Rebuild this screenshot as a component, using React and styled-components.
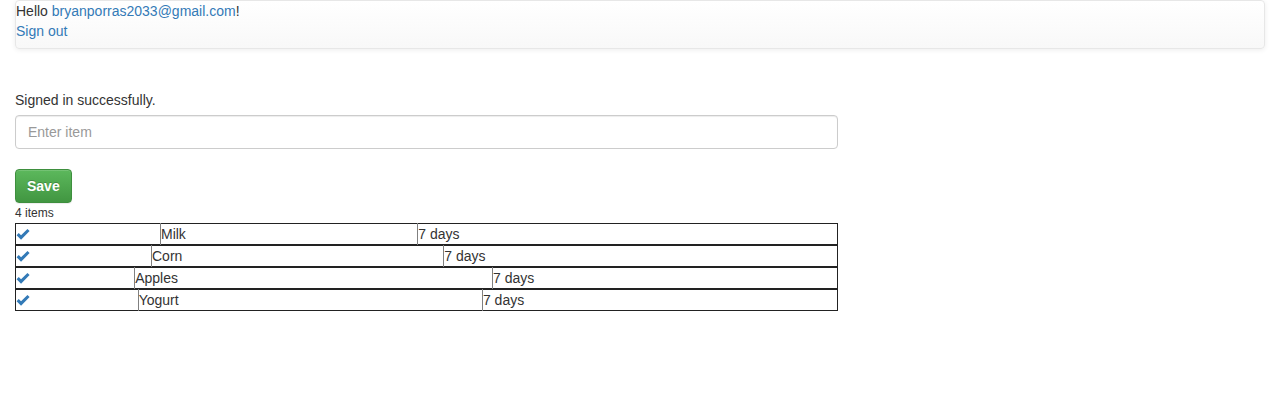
import React from 'react';
import styled, { createGlobalStyle } from 'styled-components';

const GlobalStyle = createGlobalStyle`
  body {
    margin: 0;
    font-family: "Liberation Sans", Arial, sans-serif;
    font-size: 14px;
    line-height: 20px;
    color: #333;
    background: #fff;
  }
`;

const Page = styled.div`
  padding: 0 15px;
`;

const TopBar = styled.div`
  height: 47px;
  padding: 0;
  border: 1px solid #e7e7e7;
  border-radius: 4px;
  background-image: linear-gradient(to bottom, #fff 0, #f8f8f8 100%);
  box-shadow: inset 0 1px 0 rgba(255, 255, 255, 0.15), 0 1px 5px rgba(0, 0, 0, 0.075);
`;

const Link = styled.a`
  color: #337ab7;
  text-decoration: none;
  cursor: pointer;
`;

const Line = styled.div``;

const Notice = styled.p`
  margin: 41px 0 5px;
`;

const Form = styled.form`
  width: 823px;
`;

const Input = styled.input`
  display: block;
  box-sizing: border-box;
  width: 100%;
  height: 34px;
  padding: 6px 12px;
  font: inherit;
  color: #555;
  border: 1px solid #ccc;
  border-radius: 4px;
  box-shadow: inset 0 1px 1px rgba(0, 0, 0, 0.075);
  outline: none;

  &::placeholder {
    color: #999;
  }
`;

const SaveButton = styled.button`
  display: block;
  margin-top: 20px;
  height: 34px;
  padding: 6px 11px;
  font: inherit;
  font-weight: 700;
  color: #fff;
  text-shadow: 0 -1px 0 rgba(0, 0, 0, 0.2);
  border: 1px solid #3e8f3e;
  border-radius: 4px;
  background-image: linear-gradient(to bottom, #5cb85c 0, #419641 100%);
  box-shadow: inset 0 1px 0 rgba(255, 255, 255, 0.15), 0 1px 1px rgba(0, 0, 0, 0.075);
`;

const Count = styled.small`
  display: block;
  font-size: 12px;
  line-height: 20px;
`;

const ItemTable = styled.table`
  width: 823px;
  border-collapse: collapse;
  border: 1px solid #222;
`;

const Cell = styled.td`
  padding: 0;
  height: 20px;
  border-left: 1px solid #808080;
  white-space: nowrap;

  &:first-child {
    border-left: none;
  }
`;

const Check = () => (
  <svg width="13.6" height="14" viewBox="0 0 14 14" style={{ display: 'block', overflow: 'visible' }}>
    <path d="M0.6 8.2 L2.8 6 L5.2 8.4 L11.8 1.8 L14 4 L5.2 12.8 Z" fill="#337ab7" />
  </svg>
);

const items = ['Milk', 'Corn', 'Apples', 'Yogurt'];

export default function App() {
  return (
    <Page>
      <GlobalStyle />
      <TopBar>
        <Line>
          Hello <Link>bryanporras2033@gmail.com</Link>!
        </Line>
        <Line>
          <Link>Sign out</Link>
        </Line>
      </TopBar>

      <Notice>Signed in successfully.</Notice>

      <Form onSubmit={e => e.preventDefault()}>
        <Input placeholder="Enter item" />
        <SaveButton type="submit">Save</SaveButton>
      </Form>

      <Count>{items.length} items</Count>
      {items.map(name => (
        <ItemTable key={name}>
          <tbody>
            <tr>
              <Cell><Check /></Cell>
              <Cell>{name}</Cell>
              <Cell>7 days</Cell>
            </tr>
          </tbody>
        </ItemTable>
      ))}
    </Page>
  );
}
